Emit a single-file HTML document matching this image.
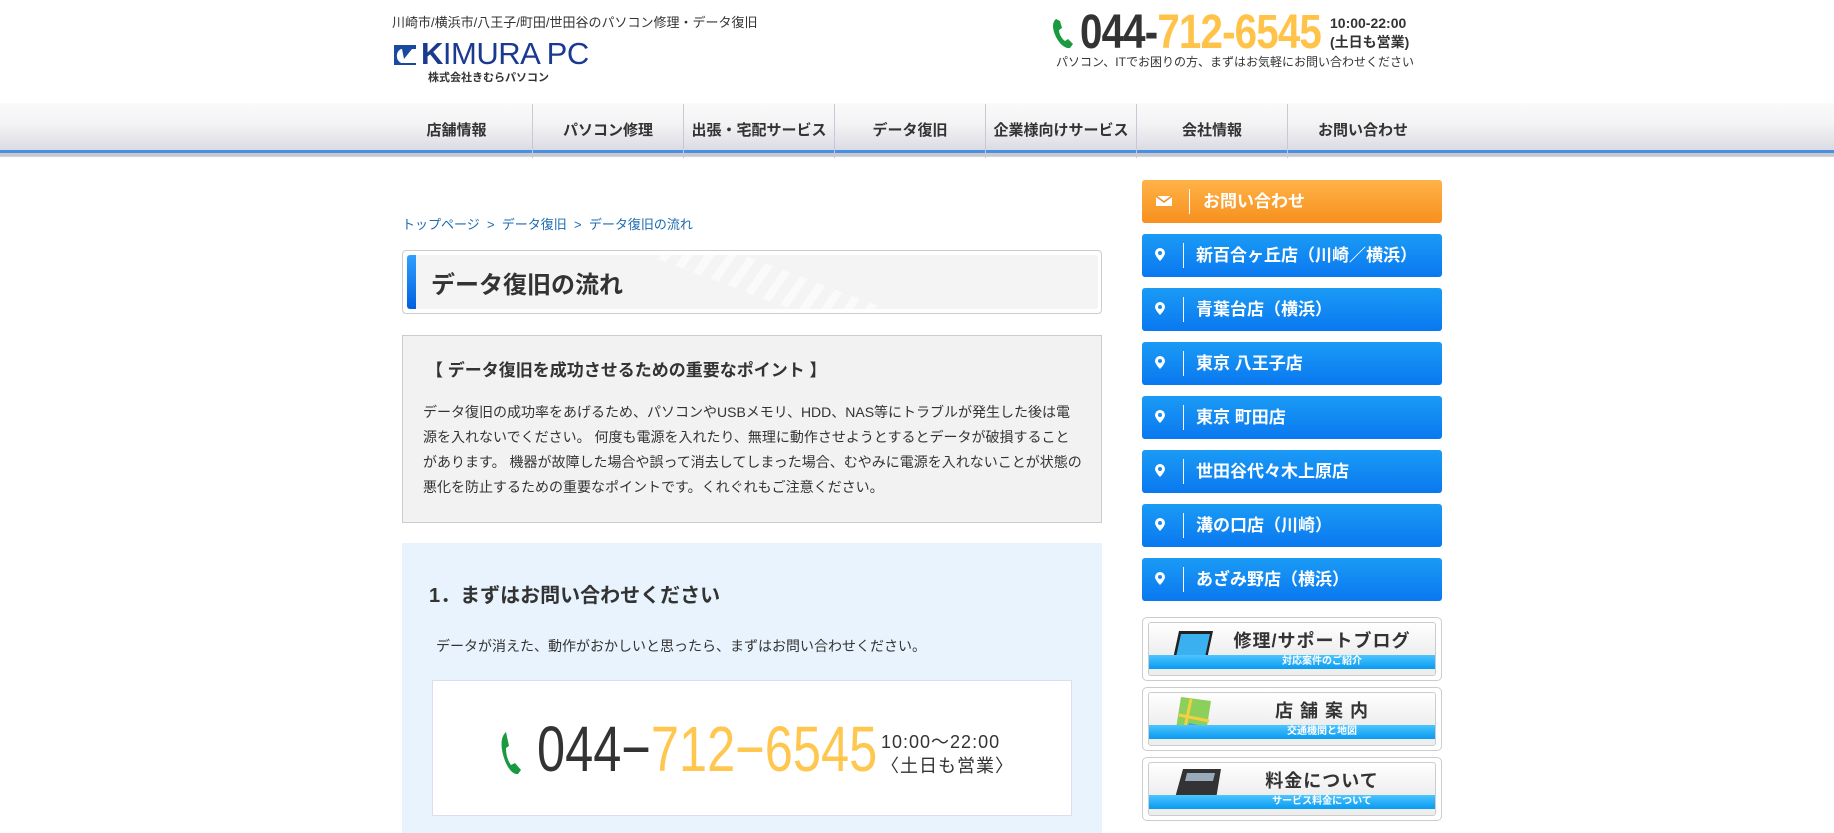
<!DOCTYPE html>
<html><head><meta charset="utf-8"><style>
*{margin:0;padding:0;box-sizing:border-box}
body{width:1834px;height:826px;overflow:hidden;background:#fff;font-family:"Liberation Sans","Noto Sans CJK JP",sans-serif;color:#333;position:relative}
.a{position:absolute}
.num{font-family:"Liberation Sans","Noto Sans CJK JP",sans-serif;transform-origin:0 0;white-space:nowrap}
.nav{position:absolute;left:0;top:103px;width:1834px;height:54px;background:linear-gradient(#fafafa,#f3f3f5 40%,#dcdce4 85%,#d0d0d8)}
.navline{position:absolute;left:0;top:150px;width:1834px;height:3px;background:#4a90e0}
.navline2{position:absolute;left:0;top:153px;width:1834px;height:3px;background:#c8c8d0}
.ni{position:absolute;top:104px;height:54px;width:151px;text-align:center;line-height:54px;font-size:15px;font-weight:bold;color:#333;border-left:1px solid #c8c8d8}
.sb{position:absolute;left:1142px;width:300px;height:43px;border-radius:3px;background:linear-gradient(#1a9bf5,#0a78f0);color:#fff;font-weight:bold;font-size:17px;line-height:43px}
.sb .ic{position:absolute;left:13px;top:14px;width:10px;height:13px}
.sb .sep{position:absolute;left:41px;top:9px;width:1px;height:25px;background:#fff}
.sb .t{position:absolute;left:54px}
.bn{position:absolute;left:1142px;width:300px;height:64px;border:1px solid #ccc;border-radius:5px;background:#fff}
.bn .in{position:absolute;left:5px;top:4px;right:5px;bottom:4px;border:1px solid #ccc;border-radius:3px;background:linear-gradient(#fff,#eee 60%);overflow:hidden}
.bn .st{position:absolute;left:0;right:0;bottom:6px;height:14px;background:linear-gradient(#4cc4ff,#0a9af0);color:#fff;font-size:10px;font-weight:bold;text-align:center;line-height:14px;padding-left:60px}
.bn .tt{position:absolute;left:60px;right:0;top:4px;text-align:center;font-size:18px;font-weight:bold;color:#333;letter-spacing:1px}
</style></head><body>
<div class="a" style="left:392px;top:12px;font-size:13px;color:#333">川崎市/横浜市/八王子/町田/世田谷のパソコン修理・データ復旧</div>
<svg class="a" style="left:392px;top:43px" width="26" height="24"><path d="M2 2h22v4H9a8 8 0 0 0 0 14h15v2H2z" fill="#1a4aa0"/><path d="M10 6h10l-8 10z" fill="#1a4aa0"/></svg>
<div class="a" style="left:421px;top:36px;font-size:31px;color:#1a3a90;letter-spacing:-0.5px"><b style="font-weight:bold">K</b>IMURA PC</div>
<div class="a" style="left:428px;top:69px;font-size:11px;font-weight:bold">株式会社きむらパソコン</div>

<svg class="a" style="left:1051px;top:17px" width="26" height="32" viewBox="0 0 26 32"><path d="M5 2c-4 3-4 10 0 18s10 12 14 11l3-4-5-5-3 2c-3-2-6-7-6-11l3-2-2-7z" fill="#1a9a40"/></svg>
<div class="a num" style="left:1080px;top:5px;font-size:48px;font-weight:bold;transform:scaleX(0.84);letter-spacing:-1px"><span style="color:#333">044-</span><span style="color:#ffc34a">712-6545</span></div>
<div class="a" style="left:1330px;top:14px;font-size:14px;font-weight:bold;line-height:19px">10:00-22:00<br>(土日も営業)</div>
<div class="a" style="left:1056px;top:53px;font-size:12px">パソコン、ITでお困りの方、まずはお気軽にお問い合わせください</div>

<div class="nav"></div><div class="navline"></div><div class="navline2"></div>
<div class="ni" style="left:381px;border-left:none">店舗情報</div>
<div class="ni" style="left:532px">パソコン修理</div>
<div class="ni" style="left:683px">出張・宅配サービス</div>
<div class="ni" style="left:834px">データ復旧</div>
<div class="ni" style="left:985px">企業様向けサービス</div>
<div class="ni" style="left:1136px">会社情報</div>
<div class="ni" style="left:1287px">お問い合わせ</div>

<div class="a" style="left:402px;top:214px;font-size:13px;color:#1a6ab0">トップページ &nbsp;&gt;&nbsp; データ復旧 &nbsp;&gt;&nbsp; データ復旧の流れ</div>

<div class="a" style="left:402px;top:250px;width:700px;height:64px;border:1px solid #ccc;border-radius:4px;background:#fff"></div>
<div class="a" style="left:407px;top:255px;width:691px;height:54px;background:#f4f4f4;border-radius:3px;overflow:hidden">
<div style="position:absolute;left:0;top:0;width:9px;height:54px;background:linear-gradient(#30a0ff,#0060e0)"></div>
<div style="position:absolute;left:240px;top:0;width:240px;height:54px;background:repeating-linear-gradient(-55deg,transparent 0 10px,#fff 10px 18px);opacity:.6;clip-path:polygon(0 0,40% 0,100% 100%,60% 100%)"></div>
<div style="position:absolute;left:24px;top:10px;font-size:24px;font-weight:bold;color:#333">データ復旧の流れ</div></div>

<div class="a" style="left:402px;top:335px;width:700px;height:188px;border:1px solid #ccc;background:#f2f2f2"></div>
<div class="a" style="left:426px;top:356px;font-size:17px;font-weight:bold">【 データ復旧を成功させるための重要なポイント 】</div>
<div class="a" style="left:423px;top:400px;width:660px;font-size:14px;line-height:25px;color:#333">データ復旧の成功率をあげるため、パソコンやUSBメモリ、HDD、NAS等にトラブルが発生した後は電源を入れないでください。 何度も電源を入れたり、無理に動作させようとするとデータが破損することがあります。 機器が故障した場合や誤って消去してしまった場合、むやみに電源を入れないことが状態の悪化を防止するための重要なポイントです。くれぐれもご注意ください。</div>

<div class="a" style="left:402px;top:543px;width:700px;height:290px;background:#e8f3fd"></div>
<div class="a" style="left:429px;top:579px;font-size:20px;font-weight:bold">1．まずはお問い合わせください</div>
<div class="a" style="left:436px;top:636px;font-size:14px">データが消えた、動作がおかしいと思ったら、まずはお問い合わせください。</div>
<div class="a" style="left:432px;top:680px;width:640px;height:136px;background:#fff;border:1px solid #dde"></div>
<svg class="a" style="left:500px;top:730px" width="24" height="46" viewBox="0 0 24 46"><path d="M6 2c-5 4-6 14-2 26s10 17 14 16l3-4-6-7-4 2c-3-4-5-10-5-17l3-2-3-14z" fill="#1a9a40"/></svg>
<div class="a num" style="left:537px;top:712px;font-size:64px;transform:scaleX(0.79)"><span style="color:#333">044−</span><span style="color:#ffc74f">712−6545</span></div>
<div class="a" style="left:881px;top:730px;font-size:18px;line-height:24px;letter-spacing:1px">10:00〜22:00<br>〈土日も営業〉</div>

<div class="sb" style="top:180px;background:linear-gradient(#ffb347,#f7901e)"><svg class="ic" style="left:14px;width:16px" viewBox="0 0 16 13"><path d="M0 2h16v10H0z" fill="#fff"/><path d="M0 2l8 6 8-6" stroke="#f7901e" stroke-width="1.5" fill="none"/></svg><div class="sep" style="left:47px"></div><div class="t" style="left:61px">お問い合わせ</div></div>
<div class="sb" style="top:234px"><svg class="ic" viewBox="0 0 10 13"><path d="M5 0a5 5 0 0 1 5 5c0 3-5 8-5 8S0 8 0 5a5 5 0 0 1 5-5z" fill="#fff"/><circle cx="5" cy="5" r="2" fill="#1a8af2"/></svg><div class="sep"></div><div class="t">新百合ヶ丘店（川崎／横浜）</div></div>
<div class="sb" style="top:288px"><svg class="ic" viewBox="0 0 10 13"><path d="M5 0a5 5 0 0 1 5 5c0 3-5 8-5 8S0 8 0 5a5 5 0 0 1 5-5z" fill="#fff"/><circle cx="5" cy="5" r="2" fill="#1a8af2"/></svg><div class="sep"></div><div class="t">青葉台店（横浜）</div></div>
<div class="sb" style="top:342px"><svg class="ic" viewBox="0 0 10 13"><path d="M5 0a5 5 0 0 1 5 5c0 3-5 8-5 8S0 8 0 5a5 5 0 0 1 5-5z" fill="#fff"/><circle cx="5" cy="5" r="2" fill="#1a8af2"/></svg><div class="sep"></div><div class="t">東京 八王子店</div></div>
<div class="sb" style="top:396px"><svg class="ic" viewBox="0 0 10 13"><path d="M5 0a5 5 0 0 1 5 5c0 3-5 8-5 8S0 8 0 5a5 5 0 0 1 5-5z" fill="#fff"/><circle cx="5" cy="5" r="2" fill="#1a8af2"/></svg><div class="sep"></div><div class="t">東京 町田店</div></div>
<div class="sb" style="top:450px"><svg class="ic" viewBox="0 0 10 13"><path d="M5 0a5 5 0 0 1 5 5c0 3-5 8-5 8S0 8 0 5a5 5 0 0 1 5-5z" fill="#fff"/><circle cx="5" cy="5" r="2" fill="#1a8af2"/></svg><div class="sep"></div><div class="t">世田谷代々木上原店</div></div>
<div class="sb" style="top:504px"><svg class="ic" viewBox="0 0 10 13"><path d="M5 0a5 5 0 0 1 5 5c0 3-5 8-5 8S0 8 0 5a5 5 0 0 1 5-5z" fill="#fff"/><circle cx="5" cy="5" r="2" fill="#1a8af2"/></svg><div class="sep"></div><div class="t">溝の口店（川崎）</div></div>
<div class="sb" style="top:558px"><svg class="ic" viewBox="0 0 10 13"><path d="M5 0a5 5 0 0 1 5 5c0 3-5 8-5 8S0 8 0 5a5 5 0 0 1 5-5z" fill="#fff"/><circle cx="5" cy="5" r="2" fill="#1a8af2"/></svg><div class="sep"></div><div class="t">あざみ野店（横浜）</div></div>

<div class="bn" style="top:617px"><div class="in"><svg style="position:absolute;left:8px;top:4px" width="60" height="42"><path d="M22 4h34l-6 28H16z" fill="#222"/><path d="M24 7h29l-5 23H19z" fill="#3ab0f0"/><path d="M4 34h50l4 6H2z" fill="#bbb"/></svg><div class="tt">修理/サポートブログ</div><div class="st">対応案件のご紹介</div></div></div>
<div class="bn" style="top:687px"><div class="in"><svg style="position:absolute;left:20px;top:2px" width="50" height="46"><path d="M12 2l30 4-6 38-30-4z" fill="#8ccf5a"/><path d="M22 4l-8 38M10 20l30 6" stroke="#f4d040" stroke-width="3"/><path d="M20 28l14 3-2 10-14-2z" fill="#4aa0e0"/></svg><div class="tt">店 舗 案 内</div><div class="st">交通機関と地図</div></div></div>
<div class="bn" style="top:757px"><div class="in"><svg style="position:absolute;left:20px;top:4px" width="55" height="42"><path d="M14 2h38l-6 36H4z" fill="#333"/><path d="M18 6h28l-2 8H16z" fill="#9ab"/></svg><div class="tt">料金について</div><div class="st">サービス料金について</div></div></div>
</body></html>
